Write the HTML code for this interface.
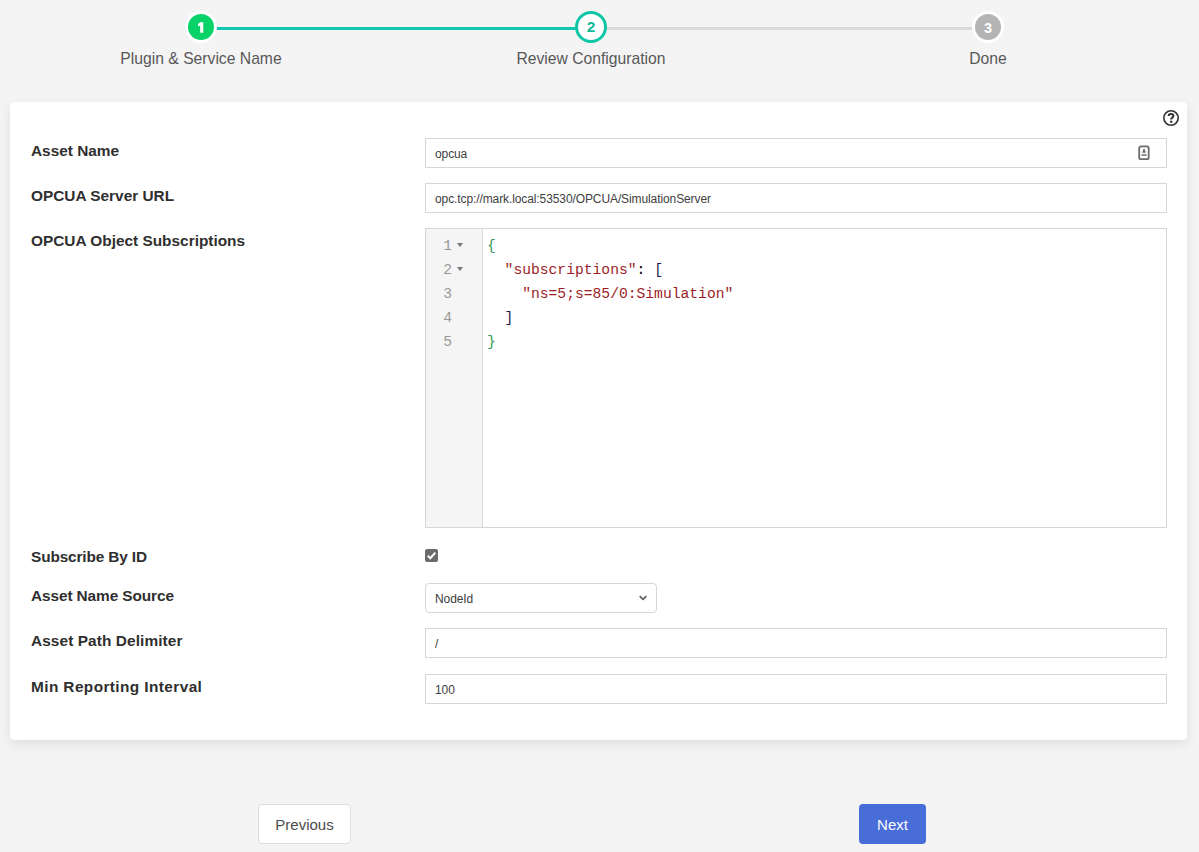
<!DOCTYPE html>
<html><head><meta charset="utf-8">
<style>
html,body{margin:0;padding:0;}
body{width:1199px;height:852px;overflow:hidden;background:#f4f4f4;position:relative;font-family:"Liberation Sans",sans-serif;}
.a{position:absolute;}
.lbl{position:absolute;left:31px;font-weight:bold;font-size:15.4px;line-height:20px;color:#2f2f2f;white-space:nowrap;}
.inp{position:absolute;left:425px;width:740px;height:28px;border:1px solid #d6d6d6;background:#fff;}
.inp span{position:absolute;left:9px;top:1px;line-height:28px;font-size:12px;color:#404040;letter-spacing:-0.1px;white-space:nowrap;}
.step{position:absolute;top:0;font-size:15.7px;line-height:20px;color:#585858;white-space:nowrap;text-align:center;width:300px;}
.circ{position:absolute;border-radius:50%;box-sizing:border-box;text-align:center;font-weight:bold;font-size:14.5px;padding-top:1px;}
.code{position:absolute;left:0;font-family:"Liberation Mono",monospace;font-size:14.67px;line-height:24px;white-space:pre;}
.ln{position:absolute;left:0;width:26px;text-align:right;font-family:"Liberation Mono",monospace;font-size:14.67px;line-height:24px;color:#999;}
.fold{position:absolute;left:31px;width:0;height:0;border-left:3px solid transparent;border-right:3px solid transparent;border-top:4px solid #777;}
</style></head>
<body>
<!-- stepper -->
<div class="a" style="left:214px;top:27px;width:362px;height:3px;background:#10c7b0;"></div>
<div class="a" style="left:606px;top:27px;width:370px;height:3px;background:#dadada;"></div>
<div class="circ" style="left:188px;top:14px;width:26px;height:26px;background:#08d268;color:#fff;line-height:26px;box-shadow:0 0 0 3px #fff;"><svg class="a" style="left:0;top:0" width="26" height="26" viewBox="0 0 26 26"><path d="M12.2 8.2 L15.3 8.2 L15.3 18.8 L12.2 18.8 L12.2 11.6 L10 12.3 L10 10.1 Z" fill="#fff"/></svg></div>
<div class="circ" style="left:575px;top:11px;width:32px;height:32px;background:#fff;border:3px solid #0ec6a5;color:#0cb996;line-height:26px;font-size:15.5px;padding-top:0;">2</div>
<div class="circ" style="left:975px;top:14px;width:26px;height:26px;background:#b4b4b4;color:#fff;line-height:26px;box-shadow:0 0 0 3px #fff;">3</div>
<div class="step" style="left:51px;top:49px;">Plugin &amp; Service Name</div>
<div class="step" style="left:441px;top:49px;">Review Configuration</div>
<div class="step" style="left:838px;top:49px;">Done</div>

<!-- card -->
<div class="a" style="left:10px;top:102px;width:1177px;height:638px;background:#fff;border-radius:4px;box-shadow:0 4px 12px rgba(0,0,0,0.09);"></div>

<!-- help icon -->
<svg class="a" style="left:1162px;top:109px" width="18" height="18" viewBox="0 0 18 18">
<circle cx="9" cy="9" r="7.2" fill="none" stroke="#333" stroke-width="1.6"/>
<path d="M6.6 7.1 C6.6 5.6 7.7 4.9 9 4.9 C10.4 4.9 11.4 5.7 11.4 6.9 C11.4 8.4 9.2 8.6 9.2 10.4" fill="none" stroke="#333" stroke-width="2"/>
<circle cx="9.2" cy="12.7" r="1.2" fill="#333"/>
</svg>

<div class="lbl" style="top:141px;">Asset Name</div>
<div class="inp" style="top:138px;"><span>opcua</span>
<svg class="a" style="left:712px;top:6px" width="14" height="17" viewBox="0 0 14 17">
<rect x="1.2" y="1.4" width="9.5" height="12.8" rx="1.8" fill="none" stroke="#6b6b6b" stroke-width="1.8"/>
<path d="M6.05 3.6 C6.6 3.6 7.8 7.3 7.8 7.8 L4.3 7.8 C4.3 7.3 5.5 3.6 6.05 3.6 Z" fill="#6b6b6b"/>
<rect x="3.5" y="9.1" width="5.1" height="1.9" fill="#8a8a8a"/>
</svg>
</div>

<div class="lbl" style="top:186px;">OPCUA Server URL</div>
<div class="inp" style="top:183px;"><span>opc.tcp://mark.local:53530/OPCUA/SimulationServer</span></div>

<div class="lbl" style="top:231px;">OPCUA Object Subscriptions</div>
<div class="a" style="left:425px;top:228px;width:740px;height:298px;border:1px solid #d6d6d6;background:#fff;">
  <div class="a" style="left:0;top:0;width:56px;height:298px;background:#f5f5f5;border-right:1px solid #dcdcdc;">
    <div class="ln" style="top:5px;">1</div><div class="fold" style="top:14px;"></div>
    <div class="ln" style="top:29px;">2</div><div class="fold" style="top:38px;"></div>
    <div class="ln" style="top:53px;">3</div>
    <div class="ln" style="top:77px;">4</div>
    <div class="ln" style="top:101px;">5</div>
  </div>
  <div class="a" style="left:61px;top:0;width:600px;height:200px;">
    <div class="code" style="top:5px;color:#2e9a5a;">{</div>
    <div class="code" style="top:29px;"><span style="color:#9c1c26;">  "subscriptions"</span><span style="color:#000;">: </span><span style="color:#1a1a4a;">[</span></div>
    <div class="code" style="top:53px;color:#9c1c26;">    "ns=5;s=85/0:Simulation"</div>
    <div class="code" style="top:77px;color:#1a1a4a;">  ]</div>
    <div class="code" style="top:101px;color:#2e9a5a;">}</div>
  </div>
</div>

<div class="lbl" style="top:547px;letter-spacing:-0.14px;">Subscribe By ID</div>
<div class="a" style="left:425px;top:549px;width:13px;height:13px;background:#6b6b6b;border-radius:2px;">
<svg class="a" style="left:0;top:0" width="13" height="13" viewBox="0 0 13 13"><path d="M2.8 6.8 L5.3 9.2 L10.3 3.6" fill="none" stroke="#fff" stroke-width="2"/></svg>
</div>

<div class="lbl" style="top:586px;letter-spacing:-0.1px;">Asset Name Source</div>
<div class="a" style="left:425px;top:583px;width:230px;height:28px;border:1px solid #d6d6d6;border-radius:4px;background:#fff;">
<span class="a" style="left:9px;top:1px;line-height:28px;font-size:12px;color:#404040;letter-spacing:-0.1px;">NodeId</span>
<svg class="a" style="left:212px;top:10px" width="10" height="8" viewBox="0 0 10 8"><path d="M1.7 2.2 L5 5.3 L8.3 2.2" fill="none" stroke="#606060" stroke-width="1.8"/></svg>
</div>

<div class="lbl" style="top:631px;letter-spacing:0.09px;">Asset Path Delimiter</div>
<div class="inp" style="top:628px;"><span>/</span></div>

<div class="lbl" style="top:677px;letter-spacing:0.4px;">Min Reporting Interval</div>
<div class="inp" style="top:674px;"><span>100</span></div>

<!-- buttons -->
<div class="a" style="left:258px;top:804px;width:91px;height:38px;border:1px solid #dcdcdc;border-radius:4px;background:#fff;text-align:center;line-height:38px;padding-top:1px;height:37px;font-size:15px;color:#4a4a4a;">Previous</div>
<div class="a" style="left:859px;top:804px;width:67px;height:40px;border-radius:4px;background:#486dd9;text-align:center;line-height:40px;padding-top:1px;height:39px;font-size:15px;color:#fff;">Next</div>
</body></html>
